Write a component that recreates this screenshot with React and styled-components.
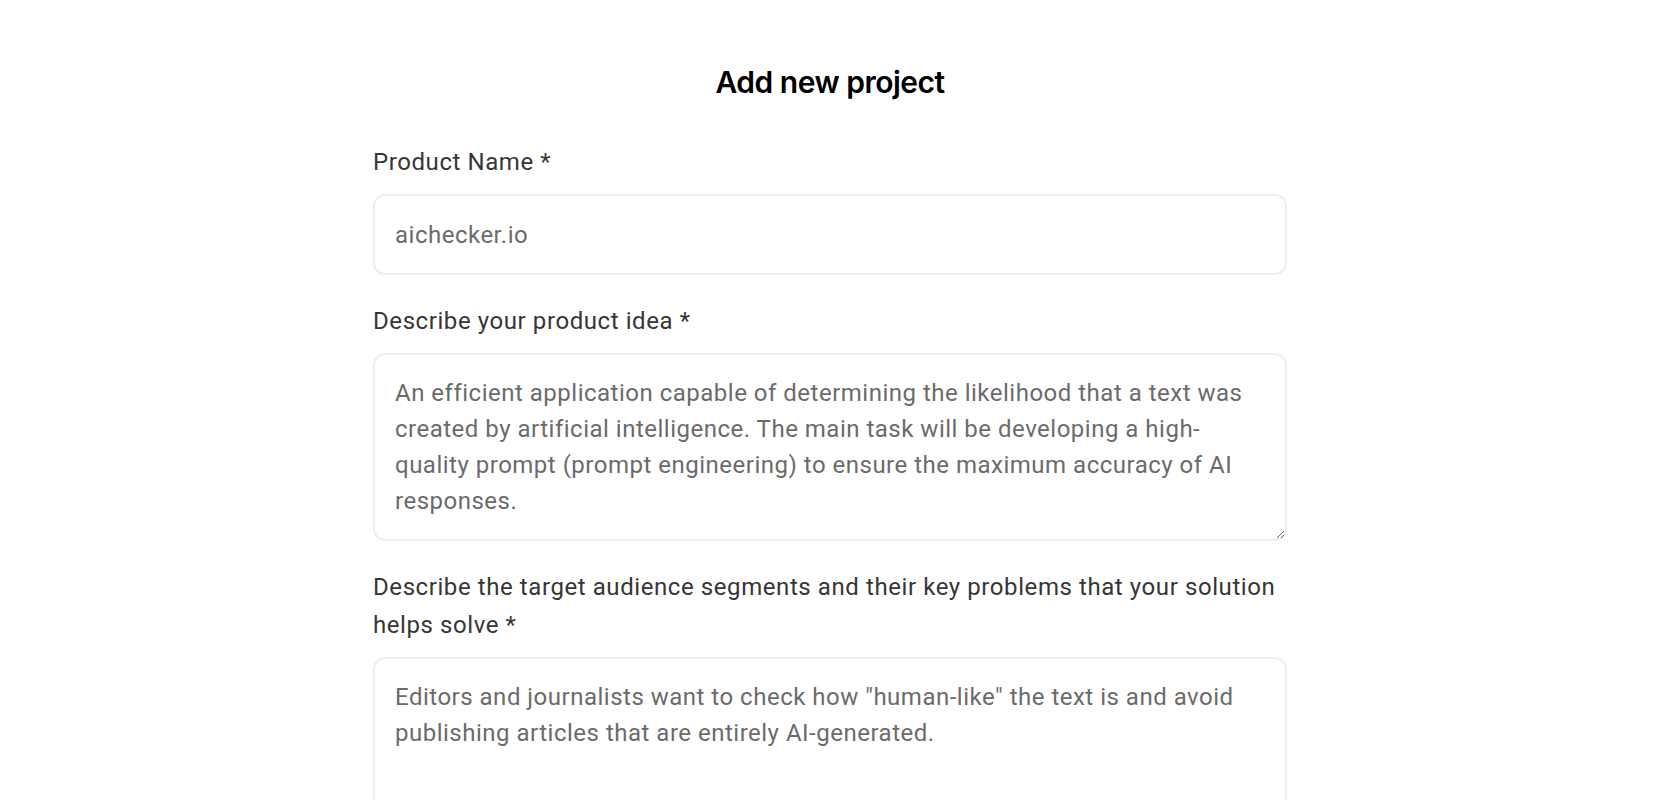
import React from "react";
import styled, { createGlobalStyle } from "styled-components";

const GlobalStyle = createGlobalStyle`
  html, body {
    margin: 0;
    padding: 0;
    background: #ffffff;
  }
  body {
    font-family: Roboto, "Liberation Sans", sans-serif;
  }
  * { box-sizing: border-box; }
`;

const Page = styled.main`
  display: flex;
  flex-direction: column;
  align-items: center;
  padding-top: 62px;
`;

const Title = styled.h1`
  margin: 0 0 41px;
  font-family: Inter, Roboto, sans-serif;
  font-size: 30px;
  line-height: 40px;
  font-weight: 600;
  color: #000;
  letter-spacing: -0.5px;
`;

const Form = styled.form`
  width: 914px;
  display: flex;
  flex-direction: column;
  gap: 27px;
`;

const Field = styled.div`
  display: flex;
  flex-direction: column;
  gap: 13px;
`;

const Label = styled.label`
  font-family: Roboto, sans-serif;
  font-size: 24px;
  line-height: 38px;
  letter-spacing: 0.58px;
  color: #363636;
`;

const fieldStyles = `
  width: 100%;
  border: 2px solid #eeeeee;
  border-radius: 12px;
  padding: 20px;
  font-family: Roboto, sans-serif;
  font-size: 24px;
  line-height: 36px;
  letter-spacing: 0.5px;
  color: #6b6b6b;
  background: #fff;
  outline: none;
`;

const Input = styled.input`
  ${fieldStyles}
  height: 81px;
`;

const TextArea = styled.textarea`
  ${fieldStyles}
  display: block;
  height: ${(p) => p.$h}px;
  resize: vertical;
`;

export default function App() {
  return (
    <>
      <GlobalStyle />
      <Page>
        <Title>Add new project</Title>
        <Form onSubmit={(e) => e.preventDefault()}>
          <Field>
            <Label htmlFor="name">Product Name *</Label>
            <Input id="name" defaultValue="aichecker.io" />
          </Field>
          <Field>
            <Label htmlFor="idea">Describe your product idea *</Label>
            <TextArea
              id="idea"
              $h={188}
              defaultValue="An efficient application capable of determining the likelihood that a text was created by artificial intelligence. The main task will be developing a high-quality prompt (prompt engineering) to ensure the maximum accuracy of AI responses."
            />
          </Field>
          <Field>
            <Label htmlFor="aud">
              Describe the target audience segments and their key problems that your solution helps solve *
            </Label>
            <TextArea
              id="aud"
              $h={188}
              defaultValue={'Editors and journalists want to check how "human-like" the text is and avoid publishing articles that are entirely AI-generated.'}
            />
          </Field>
        </Form>
      </Page>
    </>
  );
}
